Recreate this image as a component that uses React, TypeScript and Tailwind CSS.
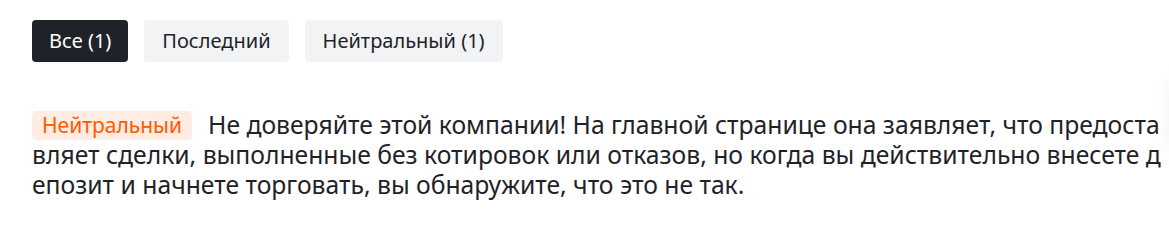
import React from "react"

const tabs = [
  { label: "Все (1)", active: true },
  { label: "Последний", active: false },
  { label: "Нейтральный (1)", active: false },
]

export default function App() {
  return (
    <div
      className="relative h-[216px] w-full overflow-hidden bg-white pl-8 pt-5"
      style={{ fontFamily: '"Noto Sans", "Open Sans", sans-serif' }}
    >
      <div className="flex gap-4">
        {tabs.map((t) => (
          <button
            key={t.label}
            className={
              t.active
                ? "h-[42px] rounded-[4px] bg-[#1f2329] px-[17px] text-[20px] text-white"
                : "h-[42px] rounded-[4px] bg-[#f2f3f5] px-[18px] text-[20px] text-[#1f2329]"
            }
          >
            {t.label}
          </button>
        ))}
      </div>

      <p className="mt-[48px] break-all text-[24.7px] leading-[30px] text-[#1f2329]">
        <span className="mr-[16px] inline-block rounded-[5px] bg-[#ffece3] px-[10px] align-[1px] text-[21px] leading-[29px] text-[#ff5a00]">
          Нейтральный
        </span>
        Не доверяйте этой компании! На главной странице она заявляет, что предоставляет сделки, выполненные без котировок или отказов, но когда вы действительно внесете депозит и начнете торговать, вы обнаружите, что это не так.
      </p>

      <div className="absolute right-[-40px] top-[80px] h-[70px] w-[40px] rounded-lg shadow-[0_0_20px_rgba(0,0,0,0.06)]" />
    </div>
  )
}
